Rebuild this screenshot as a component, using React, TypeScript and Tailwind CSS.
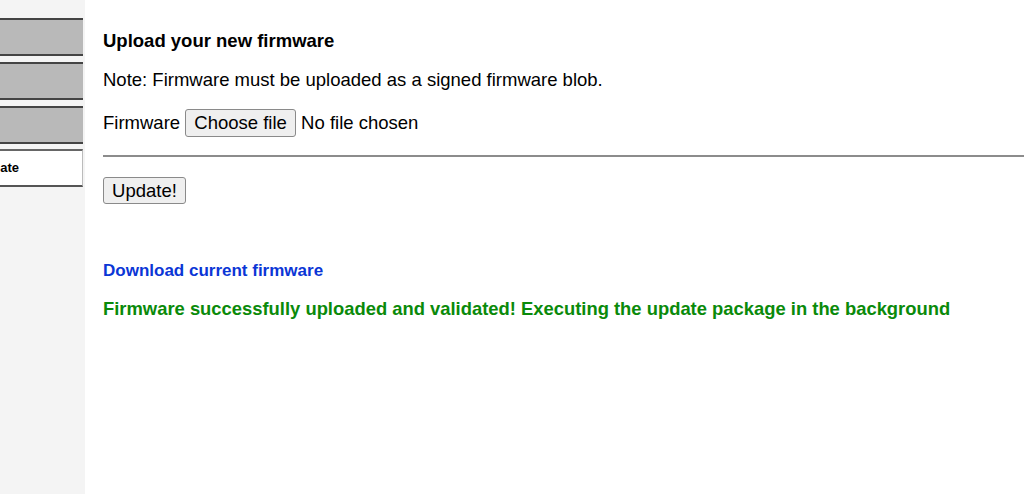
const navItems = ["Status", "Network", "Settings"];

function Sidebar() {
  return (
    <aside className="w-[85px] shrink-0 bg-[#f4f4f4] pt-[18px] overflow-hidden">
      <ul className="flex flex-col gap-[6px]">
        {navItems.map((item) => (
          <li
            key={item}
            className="h-[38px] w-[83px] border-y-2 border-[#444] bg-[#b9b9b9] text-transparent"
          >
            {item}
          </li>
        ))}
        <li className="-mt-[1px] flex h-[38px] w-[83px] items-center justify-end border-y-2 border-r border-t-[#666] border-b-[#555] border-r-[#bbb] bg-white pr-[63px] text-[13px] font-bold text-black whitespace-nowrap">
          Firmware Update
        </li>
      </ul>
    </aside>
  );
}

export default function App() {
  return (
    <div className="flex h-[494px] w-[1024px] bg-white font-['Liberation_Sans',Arial,sans-serif] text-black">
      <Sidebar />
      <main className="flex-1 pl-[18px] pt-[30px]">
        <h2 className="text-[18.5px] font-bold leading-[22px]">Upload your new firmware</h2>
        <p className="mt-[17px] text-[18.5px] leading-[22px]">
          Note: Firmware must be uploaded as a signed firmware blob.
        </p>
        <div className="mt-[18px] flex items-center gap-[5px] text-[18.5px] leading-[22px]">
          <span>Firmware</span>
          <span className="flex h-[28px] w-[111px] items-center justify-center rounded-[3px] border border-[#8a8a8a] bg-[#efefef]">
            Choose file
          </span>
          <span>No file chosen</span>
        </div>
        <hr className="mt-[18px] border-0 border-t-2 border-[#8c8c8c]" />
        <button
          type="button"
          className="mt-[20px] flex h-[27px] w-[83px] items-center justify-center rounded-[3px] border border-[#8a8a8a] bg-[#efefef] text-[18.5px] leading-[22px]"
        >
          Update!
        </button>
        <div className="mt-[55px]">
          <a href="#" className="text-[17px] font-bold leading-[22px] text-[#0b36d6]">
            Download current firmware
          </a>
        </div>
        <p className="mt-[15px] text-[18.4px] font-bold leading-[22px] text-[#0a8a0a]">
          Firmware successfully uploaded and validated! Executing the update package in the background
        </p>
      </main>
    </div>
  );
}
